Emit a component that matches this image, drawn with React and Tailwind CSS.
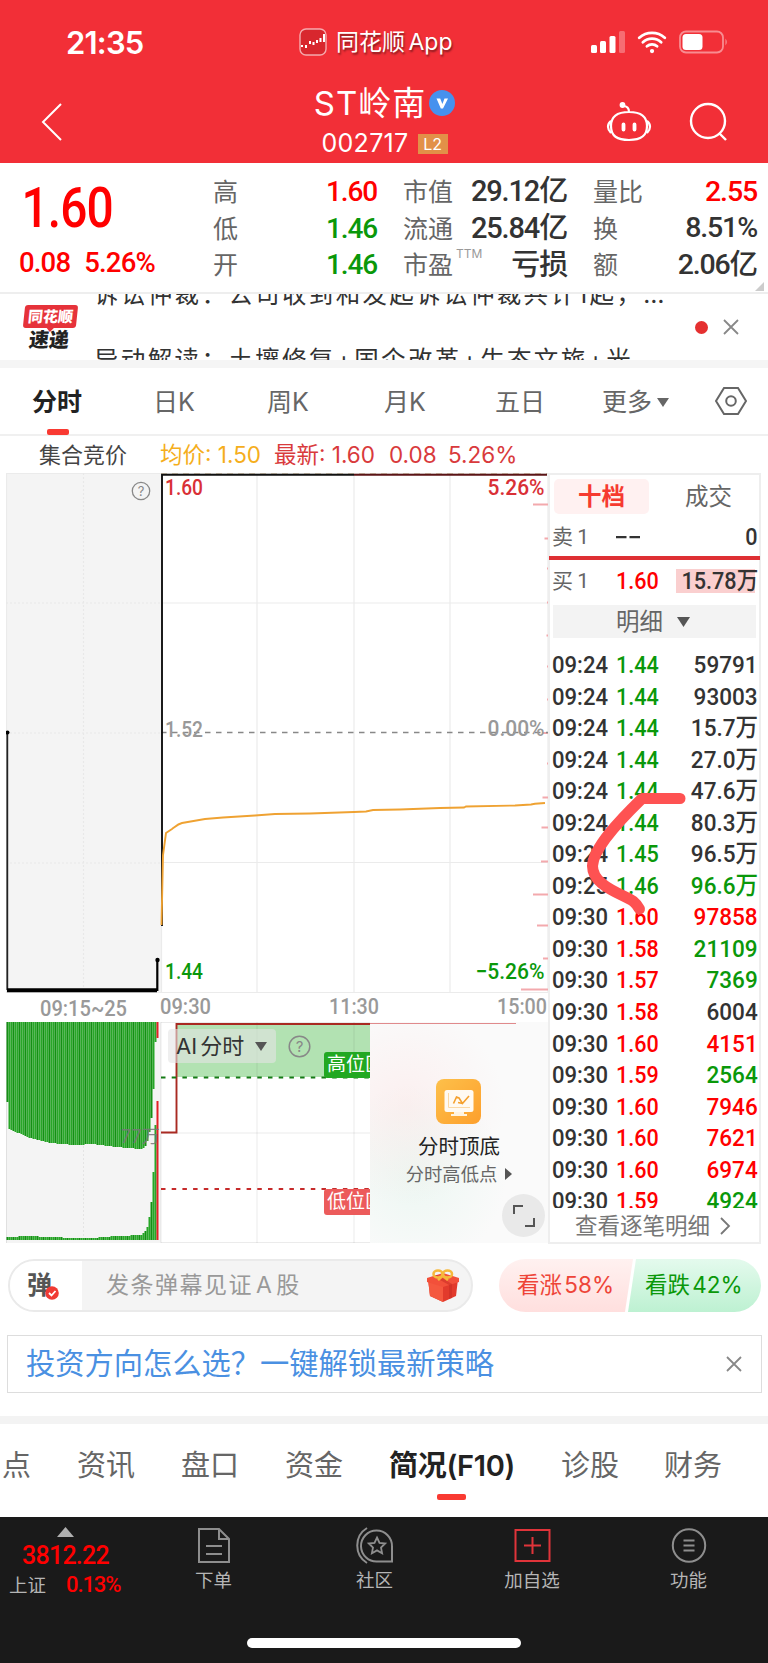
import React from "react";
import { IoWifi } from "react-icons/io5";

const GREEN = "text-[#0a980a]";
const RED = "text-[#f00]";
const DARK = "text-[#333]";

const stats = [
  {
    width: "w-[164px]",
    size: "text-[28px]",
    items: [
      { label: "高", value: "1.60", color: RED },
      { label: "低", value: "1.46", color: GREEN },
      { label: "开", value: "1.46", color: GREEN },
    ],
  },
  {
    width: "w-[164px]",
    size: "text-[29px]",
    items: [
      { label: "市值", value: "29.12亿", color: DARK },
      { label: "流通", value: "25.84亿", color: DARK },
      { label: "市盈", sup: "TTM", value: "亏损", color: DARK },
    ],
  },
  {
    width: "w-[164px]",
    size: "text-[28.500px]",
    items: [
      { label: "量比", value: "2.55", color: RED },
      { label: "换", value: "8.51%", color: DARK },
      { label: "额", value: "2.06亿", color: DARK },
    ],
  },
];

const trades = [
  ["09:24", "1.44", "59791", GREEN, DARK],
  ["09:24", "1.44", "93003", GREEN, DARK],
  ["09:24", "1.44", "15.7万", GREEN, DARK],
  ["09:24", "1.44", "27.0万", GREEN, DARK],
  ["09:24", "1.44", "47.6万", GREEN, DARK],
  ["09:24", "1.44", "80.3万", GREEN, DARK],
  ["09:24", "1.45", "96.5万", GREEN, DARK],
  ["09:25", "1.46", "96.6万", GREEN, GREEN],
  ["09:30", "1.60", "97858", RED, RED],
  ["09:30", "1.58", "21109", RED, GREEN],
  ["09:30", "1.57", "7369", RED, GREEN],
  ["09:30", "1.58", "6004", RED, DARK],
  ["09:30", "1.60", "4151", RED, RED],
  ["09:30", "1.59", "2564", RED, GREEN],
  ["09:30", "1.60", "7946", RED, RED],
  ["09:30", "1.60", "7621", RED, RED],
  ["09:30", "1.60", "6974", RED, RED],
  ["09:30", "1.59", "4924", RED, GREEN],
];

const NUM =
  "font-[family-name:Roboto,'Noto_Sans_CJK_SC',sans-serif] font-medium";

// [x, bottom of the upper bars, top of the lower bars]
const auctionShape = [
  [0, 80, 215],
  [2, 107, 215],
  [20, 115, 214],
  [42, 121, 215],
  [68, 123, 216],
  [85, 122, 216],
  [110, 125, 214],
  [134, 127, 213],
  [138, 124, 209],
  [141, 117, 203],
  [144, 96, 180],
  [146, 67, 150],
  [148, 20, 103],
  [150, 20, 103],
];

function shapeAt(x, col) {
  for (let i = 1; i < auctionShape.length; i++) {
    const a = auctionShape[i - 1];
    const b = auctionShape[i];
    if (x <= b[0]) {
      return a[col] + ((b[col] - a[col]) * (x - a[0])) / (b[0] - a[0]);
    }
  }
  return auctionShape[auctionShape.length - 1][col];
}

const auctionBars = Array.from({ length: 75 }, (_, i) => ({
  x: i * 2,
  up: i === 0 ? 80 : Math.round(shapeAt(i * 2, 1)),
  low: Math.round(shapeAt(i * 2, 2)),
}));

function StatusBar() {
  return (
    <div className="flex h-[84px] items-center pl-[66px] pr-[37px] text-white">
      <div className="w-[233px] text-[31px] font-semibold leading-none tracking-[-0.8px]">
        21:35
      </div>
      <div className="flex w-[292px] items-center">
        <svg width="28" height="28" viewBox="0 0 28 28" fill="none">
          <rect x="1" y="1" width="26" height="26" rx="6" fill="#d8272e" stroke="#fff" strokeOpacity=".6" strokeWidth="1.4" />
          <path d="M3 17v2M7 17v3M11 13v3M14.500 14v3M18 12v3M21.500 10v4M25 6v8" stroke="#fff" strokeWidth="2" />
        </svg>
        <span className="ml-[9px] text-[23px] leading-none [text-shadow:1px_2px_2px_rgba(0,0,0,.45)] [word-spacing:-3px]">
          同花顺 App
        </span>
      </div>
      <svg width="34" height="24" viewBox="0 0 34 24" fill="#fff">
        <rect x="0" y="15" width="6" height="8" rx="1.500" />
        <rect x="9" y="11" width="6" height="12" rx="1.500" />
        <rect x="18.500" y="6" width="6" height="17" rx="1.500" />
        <rect x="28" y="1" width="6" height="22" rx="1.500" opacity=".3" />
      </svg>
      <IoWifi className="ml-[10px] h-[34px] w-[34px]" />
      <svg className="ml-[10px]" width="50" height="24" viewBox="0 0 50 24">
        <rect x="1" y="1.500" width="43" height="21" rx="6" fill="none" stroke="#fff" strokeOpacity=".45" strokeWidth="1.800" />
        <rect x="3.500" y="4" width="20" height="16" rx="3.500" fill="#fff" />
        <path d="M46.500 8.500q2.500 3.500 0 7z" fill="#fff" opacity=".5" />
      </svg>
    </div>
  );
}

function Header() {
  return (
    <header className="h-[163px] bg-[#f22f37]">
      <StatusBar />
      <div className="flex h-[79px] items-start justify-between pl-[40px] pr-[39px] text-white">
        <svg className="mt-[19px]" width="24" height="38" viewBox="0 0 24 38" fill="none" stroke="#fff" strokeWidth="2">
          <path d="M21 1 3 19l18 18" />
        </svg>
        <div className="ml-[99px] flex w-[180px] flex-col items-center">
          <div className="flex h-[38px] items-center">
            <span className="whitespace-nowrap text-[33px] leading-none tracking-[1px]">ST岭南</span>
            <svg className="ml-[3px]" width="26" height="26" viewBox="0 0 26 26">
              <circle cx="13" cy="13" r="13" fill="#4691ee" />
              <path d="M7.500 8.500h3.700l2.200 5.600 2.100-5.600h3.500l-5 10h-2.200z" fill="#fff" />
            </svg>
          </div>
          <div className="flex h-[43px] items-center">
            <span className="text-[25px] leading-none tracking-[0.3px]">002717</span>
            <span className="ml-[9px] flex h-[20px] w-[30px] items-center justify-center bg-[#e29048] text-[16px] leading-none">
              L2
            </span>
          </div>
        </div>
        <div className="flex gap-[37px] pt-[17px]">
          <svg width="46" height="42" viewBox="0 0 46 42" fill="none" stroke="#fff" strokeWidth="2.200">
            <path d="M23 11c13 0 18 5 18 14 0 10-6 14-18 14S5 35 5 25c0-9 5-14 18-14zM5 20c-4 3-4 8 0 12M41 20c4 3 4 8 0 12M23 11c0-4-2-6-6-6" />
            <circle cx="16.500" cy="4" r="1.800" fill="#fff" />
            <path d="M17.500 23.500v5M28.500 23.500v5" strokeWidth="3.800" strokeLinecap="round" />
          </svg>
          <svg width="40" height="42" viewBox="0 0 40 42" fill="none" stroke="#fff" strokeWidth="2.400">
            <circle cx="19" cy="20" r="17" />
            <path d="m30 32 7 7" />
          </svg>
        </div>
      </div>
    </header>
  );
}

function Quote() {
  return (
    <section className="relative flex h-[131px] border-b-2 border-[#eee] pt-[10px]">
      <div className="w-[213px] pl-[19px]">
        <div className={`${NUM} ${RED} w-[120px] origin-left scale-x-[0.87] pl-[3px] pt-[10px] text-[55px] leading-[50px] tracking-[-0.02em]`}>
          1.60
        </div>
        <div className={`${NUM} ${RED} flex gap-[14px] pt-[15px] text-[27.500px] leading-[30px] tracking-[-0.03em]`}>
          <span>0.08</span>
          <span>5.26%</span>
        </div>
      </div>
      <div className="flex gap-[26px]">
        {stats.map((col, i) => (
          <div key={i} className={col.width}>
            {col.items.map((s) => (
              <div key={s.label} className="flex h-[36.700px] items-center justify-between whitespace-nowrap">
                <span className="flex pt-[2px] text-[25px] leading-none text-[#666]">
                  {s.label}
                  {s.sup && (
                    <span className="-mt-[5px] ml-[3px] text-[12px] text-[#999]">
                      {s.sup}
                    </span>
                  )}
                </span>
                <span className={`${NUM} ${s.color} ${col.size} pt-[1px] leading-none tracking-[-0.04em]`}>
                  {s.value}
                </span>
              </div>
            ))}
          </div>
        ))}
      </div>
      <svg className="absolute bottom-[1px] right-[4px]" width="9" height="9">
        <path d="M9 0v9H0z" fill="#ccc" />
      </svg>
    </section>
  );
}

function News() {
  return (
    <section className="flex h-[66px] overflow-hidden bg-white">
      <div className="w-[94px] pl-[24px] pt-[11px]">
        <div className="relative flex h-[23px] w-[53px] -skew-x-6 items-center justify-center rounded-[3px] bg-[#e6323a] text-[15px] font-black leading-none text-white">
          同花顺
          <svg className="absolute -bottom-[4px] left-[23px]" width="9" height="5">
            <path d="M0 0h9L4.500 5z" fill="#e6323a" />
          </svg>
        </div>
        <div className="mt-[2px] -skew-x-6 pl-[5px] text-[20px] font-black leading-[20px] text-[#222]">
          速递
        </div>
      </div>
      <div className="h-[66px] w-[592px] overflow-hidden whitespace-nowrap text-[24.500px] tracking-[2.350px] text-[#333]">
        <div className="-mt-[20px] h-[60px] leading-[40px]">
          诉讼仲裁：公司收到和发起诉讼仲裁共计1起，…
        </div>
        <div className="mt-[6px] leading-[40px]">
          异动解读：土壤修复+国企改革+生态文旅+光
        </div>
      </div>
      <div className="flex h-[66px] items-center pl-[9px]">
        <span className="h-[13px] w-[13px] rounded-full bg-[#e53030]" />
        <svg className="ml-[15px]" width="16" height="16" stroke="#888" strokeWidth="1.800">
          <path d="m1 1 14 14M15 1 1 15" />
        </svg>
      </div>
    </section>
  );
}

function PeriodTabs() {
  return (
    <nav className="flex h-[68px] items-center border-b-2 border-[#f0f0f0] pt-[2px] text-[25px] leading-none text-[#666]">
      <div className="relative ml-[32px] w-[121px] font-bold text-[#222]">
        分时
        <span className="absolute -bottom-[20px] left-[15px] h-[6px] w-[22px] rounded-[2px] bg-[#f93a32]" />
      </div>
      <div className="w-[114px]">日K</div>
      <div className="w-[117px]">周K</div>
      <div className="w-[111px]">月K</div>
      <div className="w-[107px]">五日</div>
      <div className="flex w-[112px] items-center">
        更多
        <svg className="ml-[5px]" width="12" height="9">
          <path d="M0 0h12L6 9z" fill="#666" />
        </svg>
      </div>
      <svg className="-mt-[2px]" width="34" height="30" viewBox="0 0 34 30" fill="none" stroke="#666" strokeWidth="2">
        <path d="M10 2h14l8 13-8 13H10L2 15z" />
        <circle cx="17" cy="15" r="4.800" />
      </svg>
    </nav>
  );
}

function Legend() {
  return (
    <div className="flex h-[37px] items-center whitespace-nowrap pt-[1px] text-[22.500px] leading-none">
      <span className="ml-[39px] w-[121px] text-[22px] text-[#444]">集合竞价</span>
      <span className="w-[114px] text-[#f5ae1c]">均价: 1.50</span>
      <span className="w-[115px] text-[#d93a3c]">最新: 1.60</span>
      <span className="w-[59px] text-[#d93a3c]">0.08</span>
      <span className="text-[#d93a3c]">5.26%</span>
    </div>
  );
}

const label = { fontFamily: "Roboto", fontWeight: 500, fontSize: 22 };

function PriceChart() {
  return (
    <svg className="block" width="542" height="550" viewBox="6 473 542 550">
      <rect x="6" y="473" width="155" height="520" fill="#f4f4f4" />
      <g stroke="#ebebeb" strokeWidth="1.200" fill="none">
        <path d="M6 473.500h542M161 603h387M161 862.500h387M6 992.500h542M6.500 473v520M161.500 473v520M257 473v520M354 473v520M450 473v520M548 473v520" />
        <path d="M83.500 473v520M6 603h155M6 733h155M6 863h155" strokeDasharray="2 2" stroke="#e8e8e8" />
      </g>
      <path d="M533 504.500h15M544.500 538.500h4M547 568.500h1M547 602.500h1M546.500 635.500h2M547 666.500h1M547 699.500h1M543 733h5M547 763.500h1M542.500 797.500h6M541.500 827.500h7M541 861.500h7M533 894.500h15M537 925.500h11M543 958.500h5M521 989.500h27" stroke="#f3a9ad" strokeWidth="1.800" />
      <path d="M161 732.500h387" stroke="#888" strokeWidth="1.300" strokeDasharray="5.500 5.500" />
      <path d="M161 473.300h386" stroke="#c9b9a0" strokeWidth="1" strokeDasharray="6 5" />
      <path d="M162 926V474.700h192" stroke="#111" strokeWidth="1.900" fill="none" />
      <path d="M354 474.700h193" stroke="#5b1416" strokeWidth="1.900" />
      <path d="M161.500 925 163 855l3-22 6-4c4-3 6-5 10-6l23-4 18-1.500 32-2 20-1.500 35-.5 44-1.500 12-.5 7-1.500 27-.5 40-1.500 24-.5 2-1 49-1 16-1 4-.7 10-.8" stroke="#efa232" strokeWidth="1.900" fill="none" />
      <path d="M7.300 732v258" stroke="#222" strokeWidth="1.800" />
      <path d="M7 990.300h150" stroke="#000" strokeWidth="4" />
      <path d="M157.300 991v-31" stroke="#000" strokeWidth="2.200" />
      <circle cx="7.500" cy="732.500" r="2" />
      <circle cx="157.500" cy="960" r="2.200" />
      <g fill="none" stroke="#888" strokeWidth="1.300">
        <circle cx="141" cy="491" r="8.700" />
      </g>
      <text x="141" y="496" textAnchor="middle" fontSize="13" fill="#888">?</text>
      <g style={label}>
        <text x="165" y="495" textLength="38" lengthAdjust="spacingAndGlyphs" fill="#d93036">1.60</text>
        <text x="487.500" y="495" textLength="57" lengthAdjust="spacingAndGlyphs" fill="#d93036">5.26%</text>
        <text x="165" y="736.500" textLength="38" lengthAdjust="spacingAndGlyphs" fill="#999">1.52</text>
        <text x="487.500" y="736" textLength="57" lengthAdjust="spacingAndGlyphs" fill="#999">0.00%</text>
        <text x="165" y="979" textLength="38" lengthAdjust="spacingAndGlyphs" fill="#0a980a">1.44</text>
        <text x="475.500" y="979" textLength="69" lengthAdjust="spacingAndGlyphs" fill="#0a980a">−5.26%</text>
        <g fill="#999">
          <text x="40" y="1016" textLength="87" lengthAdjust="spacingAndGlyphs">09:15~25</text>
          <text x="160" y="1014" textLength="51" lengthAdjust="spacingAndGlyphs">09:30</text>
          <text x="329" y="1014" textLength="50" lengthAdjust="spacingAndGlyphs">11:30</text>
          <text x="497" y="1014" textLength="50" lengthAdjust="spacingAndGlyphs">15:00</text>
        </g>
      </g>
    </svg>
  );
}

function VolumeChart() {
  return (
    <div className="relative h-[221px] w-[542px] overflow-hidden">
      <svg className="block" width="542" height="221" viewBox="0 0 542 221">
        <rect width="155" height="221" fill="#f4f4f4" />
        <path d="M77.500 120v100" stroke="#e4e4e4" strokeDasharray="2 2" />
        {auctionBars.map((b) => (
          <g key={b.x} fill={(b.x / 2) % 3 === 0 ? "#149014" : "#27a627"}>
            <rect x={b.x + 0.5} y="0" width="2" height={b.up} />
            <rect x={b.x + 0.5} y={b.low} width="2" height={218 - b.low} />
          </g>
        ))}
        <path d="M151.500 0v16M151.500 79v139" stroke="#e22026" strokeWidth="2" />
        <text x="115" y="121" fontSize="18" fill="#777" fillOpacity=".85">77万</text>
        <rect x="171" y="1" width="200" height="54" fill="#b2e2b2" />
        <path d="M155 .5h387M155 111h387M155 220.500h387M.5 0v221M155 0v221M251 0v221M348 0v221" stroke="#000" strokeOpacity=".08" fill="none" />
        <path d="M155 110.500h15.500V2H375" stroke="#a92a22" strokeWidth="1.900" fill="none" />
        <path d="M155 55.500h220" stroke="#147a14" strokeWidth="2" strokeDasharray="4.500 6.200" />
        <path d="M155 167h220" stroke="#c62b2b" strokeWidth="2" strokeDasharray="4.500 6.200" />
      </svg>
      <div className="absolute left-[318px] top-[30px] h-[26px] w-[66px] whitespace-nowrap rounded-[3px] bg-[#22a822] pl-[3px] text-[19px] leading-[26px] text-white">
        高位区
      </div>
      <div className="absolute left-[318px] top-[167px] h-[26px] w-[66px] whitespace-nowrap rounded-[3px] bg-[#ec5b5b] pl-[3px] text-[19px] leading-[26px] text-white">
        低位区
      </div>
      <div className="absolute left-[162px] top-[7px] flex h-[34px] w-[108px] items-center rounded-[4px] bg-[#e5e5e5]/60 pl-[8px] text-[22px] leading-none text-[#333] [word-spacing:-3px]">
        AI 分时
        <svg className="ml-[11px]" width="12" height="9">
          <path d="M0 0h12L6 9z" fill="#555" />
        </svg>
      </div>
      <svg className="absolute left-[282px] top-[13px]" width="23" height="23">
        <circle cx="11.500" cy="11.500" r="10.300" fill="none" stroke="#888" strokeWidth="1.500" />
        <text x="11.500" y="17" fontSize="15" textAnchor="middle" fill="#888">?</text>
      </svg>
      <div className="absolute left-[364px] top-0 flex h-[221px] w-[178px] flex-col items-center bg-[#fafafa] bg-[radial-gradient(circle_at_20%_38%,rgba(255,215,215,.3),transparent_50%),radial-gradient(circle_at_25%_70%,rgba(205,240,225,.3),transparent_45%)] pt-[57px]">
        <span className="absolute left-0 top-[1px] h-[1px] w-[146px] bg-[#e08a8c]" />
        <svg className="-ml-[1px]" width="45" height="45" viewBox="0 0 45 45">
          <defs>
            <linearGradient id="tip" x1="0" y1="0" x2="1" y2="1">
              <stop offset="0" stopColor="#fdc04a" />
              <stop offset="1" stopColor="#fd9f2c" />
            </linearGradient>
          </defs>
          <rect width="45" height="45" rx="8" fill="url(#tip)" />
          <rect x="8.500" y="11" width="29" height="22" rx="2.500" fill="#fffaf2" />
          <path d="M18 33h10v2h3v2H15v-2h3z" fill="#fff3df" />
          <path d="M12.500 14v14.500H34" stroke="#fbd9a5" fill="none" />
          <path d="M17.500 24.500 20.500 18l2.500 1 3.500 5.500 6.500-7.500M22 23.500l4.500 1" stroke="#f5a02c" strokeWidth="1.600" fill="none" />
        </svg>
        <div className="mt-[12px] text-[20.500px] leading-[21px] text-[#222]">分时顶底</div>
        <div className="mt-[8px] flex items-center text-[18.300px] leading-[18px] text-[#666]">
          分时高低点
          <svg className="ml-[8px]" width="7" height="12">
            <path d="M0 0v12l7-6z" fill="#555" />
          </svg>
        </div>
        <div className="absolute left-[132px] top-[172px] flex h-[43px] w-[43px] items-center justify-center rounded-full bg-[#e9e9e9]">
          <svg width="24" height="24" fill="none" stroke="#555" strokeWidth="2">
            <path d="M2 10V2h9M22 14v8h-9" />
          </svg>
        </div>
      </div>
    </div>
  );
}

function OrderPanel() {
  return (
    <aside className="flex h-[771px] w-[213px] flex-col border-2 border-[#eee]">
      <div className="flex h-[43px] items-center pl-[4px] text-[23.500px] leading-none">
        <span className="flex h-[35px] w-[95px] items-center justify-center rounded-[5px] bg-[#fff1f1] font-bold text-[#f63a30]">
          十档
        </span>
        <span className="ml-[36px] text-[#666]">成交</span>
      </div>
      <div className={`${NUM} flex h-[38px] items-center pl-[2px] pr-[1px] text-[24px] leading-none text-[#333]`}>
        <span className="w-[64px] text-[21px] font-normal text-[#666] [word-spacing:-1px]">卖 1</span>
        <svg width="25" height="4" fill="#333">
          <path d="M0 1h10.500v2.200H0zM13.500 1H24v2.200H13.500z" />
        </svg>
        <span className="ml-auto origin-right scale-x-[0.9]">0</span>
      </div>
      <div className="-mx-[1px] h-[4px] bg-[#de2f33]" />
      <div className={`${NUM} flex h-[42px] items-center pl-[2px] pr-[1px] text-[24px] leading-none text-[#333]`}>
        <span className="w-[64px] text-[21px] font-normal text-[#666] [word-spacing:-1px]">买 1</span>
        <span className={`${RED} origin-left scale-x-[0.9]`}>1.60</span>
        <span className="ml-auto flex h-[24px] w-[82px] items-center justify-end whitespace-nowrap bg-[linear-gradient(to_right,#facfcf_79px,transparent_79px)]">
          <span className="origin-right scale-x-[0.9]">15.78万</span>
        </span>
      </div>
      <div className="mx-[3px] mt-[3px] flex h-[33px] items-center bg-[#f3f3f3] pl-[63px] text-[23.500px] leading-none text-[#666]">
        明细
        <svg className="ml-[14px]" width="13" height="10">
          <path d="M0 0h13L6.500 10z" fill="#555" />
        </svg>
      </div>
      <div className="mt-[11px] h-[559px] overflow-hidden pt-[0.500px]">
        {trades.map(([time, price, vol, priceColor, volColor], i) => (
          <div key={i} className={`${NUM} flex h-[31.560px] items-center pl-[2px] pr-[1px] text-[24.500px] leading-none`}>
            <span className={`w-[64px] origin-left scale-x-[0.9] ${DARK}`}>{time}</span>
            <span className={`origin-left scale-x-[0.88] ${priceColor}`}>{price}</span>
            <span className={`ml-auto origin-right scale-x-[0.92] ${volColor}`}>{vol}</span>
          </div>
        ))}
      </div>
      <div className="flex h-[34px] items-center pl-[25px] pt-[2px] text-[22.500px] leading-none text-[#777]">
        查看逐笔明细
        <svg className="ml-[10px]" width="11" height="18" fill="none" stroke="#777" strokeWidth="1.800">
          <path d="m1 1 8 8-8 8" />
        </svg>
      </div>
    </aside>
  );
}

function Annotation() {
  return (
    <svg className="pointer-events-none absolute left-[575px] top-[315px]" width="120" height="140" viewBox="575 788 120 140">
      <path d="M680 798.500h-38C620 820 593 848 592.500 866c0 14 14 22 31 30 9 4 12 6 16 13" fill="none" stroke="#fe5252" strokeWidth="11" strokeLinecap="round" strokeLinejoin="round" />
    </svg>
  );
}

function Danmaku() {
  return (
    <section className="flex h-[91px] pl-[8px] pt-[15px]">
      <div className="flex h-[53px] w-[465px] items-center overflow-hidden rounded-full border-2 border-[#eaeaea] bg-[#f4f4f4]">
        <div className="relative h-full w-[72px] bg-white pl-[17px] text-[25px] font-bold leading-[48px] text-[#555]">
          弹
          <svg className="absolute left-[35px] top-[25px]" width="14" height="14">
            <circle cx="7" cy="7" r="6.800" fill="#f03a34" />
            <path d="m4 7 2.500 2.500L10.500 5" fill="none" stroke="#fff" strokeWidth="1.800" />
          </svg>
        </div>
        <span className="pl-[24px] text-[23px] leading-none tracking-[1.500px] text-[#999] [word-spacing:-5px]">
          发条弹幕见证 A 股
        </span>
        <svg className="ml-auto mr-[12px]" width="32" height="34" viewBox="0 0 32 34">
          <path d="m1 10 15-5 15 5-2 17-13 6L3 27z" fill="#e23a2c" />
          <path d="m1 10 15 5v18L3 27z" fill="#f4583f" />
          <path d="m0 9 16-5 16 5v4l-16 5-16-5z" fill="#f2503a" />
          <path d="m6 7 16 9v14l3-1V15L10 6z" fill="#c62a22" opacity=".5" />
          <g fill="none" stroke="#f6b83c" strokeWidth="2.600">
            <ellipse cx="11" cy="5" rx="4.500" ry="3.500" />
            <ellipse cx="20.500" cy="5" rx="4.500" ry="3.500" />
            <path d="M15.500 7 11 11M16 7l5 4" />
          </g>
        </svg>
      </div>
      <div className="ml-[26px] flex text-[22.500px] leading-none [word-spacing:-4px]">
        <div className="flex h-[53px] w-[134px] items-center rounded-l-full bg-linear-to-b from-[#fff1f0] to-[#ffdfde] pl-[18px] text-[#ee4438] [clip-path:polygon(0_0,100%_0,94%_100%,0_100%)]">
          看涨 58%
        </div>
        <div className="-ml-[5px] flex h-[53px] w-[133px] items-center rounded-r-full bg-linear-to-b from-[#e4faed] to-[#bdf1d2] pl-[17px] text-[#0a980a] [clip-path:polygon(6%_0,100%_0,100%_100%,0_100%)]">
          看跌 42%
        </div>
      </div>
    </section>
  );
}

function BottomNav() {
  return (
    <footer className="relative flex h-[147px] bg-[#1a1a1a] pt-[10px] text-[18.500px] leading-none text-[#b5b5b5]">
      <div className="w-[129px]">
        <svg className="ml-[57px]" width="17" height="10">
          <path d="M8.500 0 17 10H0z" fill="#b0b0b0" />
        </svg>
        <div className={`${NUM} ${RED} mt-[7px] pl-[22px] text-[25px] leading-[24px] tracking-[-0.03em]`}>
          3812.22
        </div>
        <div className="mt-[6px] flex items-center pl-[9px]">
          上证
          <span className={`${NUM} ${RED} ml-[20px] text-[22px] tracking-[-0.05em]`}>0.13%</span>
        </div>
      </div>
      <div className="flex w-[169px] flex-col items-center">
        <svg width="34" height="37" viewBox="0 0 34 37" fill="none" stroke="#8e8e8e" strokeWidth="2">
          <path d="M2 2h20l10 10v23H2zM22 2v10h10M9 19h16M9 27h16" />
        </svg>
        <span className="mt-[7px]">下单</span>
      </div>
      <div className="flex w-[153px] flex-col items-center">
        <svg width="38" height="37" viewBox="0 0 38 37" fill="none" stroke="#8e8e8e" strokeWidth="2">
          <path d="M36 34.500H21.500a15.500 15.500 0 1 1 14.500-15zM11 1C-2 9-2 28 11 36" />
          <path d="m21 10.500 2.500 5.300 5.700.7-4.200 4 1.100 5.700-5.100-2.800-5.100 2.800 1.100-5.700-4.200-4 5.700-.7z" strokeWidth="1.800" />
        </svg>
        <span className="mt-[7px]">社区</span>
      </div>
      <div className="flex w-[162px] flex-col items-center">
        <svg width="37" height="37" viewBox="0 0 37 37" fill="none" stroke="#e0343a" strokeWidth="2">
          <path d="M1.500 3h34v31h-34zM18.500 10v17M10 18.500h17" />
        </svg>
        <span className="mt-[7px]">加自选</span>
      </div>
      <div className="flex w-[151px] flex-col items-center">
        <svg width="36" height="37" viewBox="0 0 36 37" fill="none" stroke="#8e8e8e" strokeWidth="2">
          <circle cx="18" cy="18.500" r="16.200" />
          <path d="M12.500 13.500h11M12.500 18.500h11M12.500 23.500h11" />
        </svg>
        <span className="mt-[7px]">功能</span>
      </div>
      <span className="absolute left-[247px] top-[121px] h-[10px] w-[274px] rounded-full bg-white" />
    </footer>
  );
}

export default function App() {
  return (
    <div className="h-[1663px] w-[768px] overflow-hidden bg-white font-[family-name:Inter,'Noto_Sans_CJK_SC',sans-serif]">
      <Header />
      <Quote />
      <News />
      <div className="h-[8px] bg-[#f5f5f5]" />
      <PeriodTabs />
      <Legend />
      <main className="relative flex h-[771px] pl-[6px]">
        <div>
          <PriceChart />
          <div className="-mt-[1px]">
            <VolumeChart />
          </div>
        </div>
        <OrderPanel />
        <Annotation />
      </main>
      <Danmaku />
      <div className="ml-[7px] flex h-[58px] w-[755px] items-center justify-between border border-[#ddd] pl-[18px] pr-[19px]">
        <span className="text-[29.250px] leading-none text-[#4a90e2]">
          投资方向怎么选？一键解锁最新策略
        </span>
        <svg width="16" height="16" stroke="#888" strokeWidth="1.800">
          <path d="m1 1 14 14M15 1 1 15" />
        </svg>
      </div>
      <div className="mt-[23px] h-[8px] bg-[#f3f3f3]" />
      <nav className="flex h-[93px] whitespace-nowrap pl-[2px] pt-[26px] text-[29px] leading-[32px] text-[#666]">
        <span className="w-[75px]">点</span>
        <span className="w-[104px]">资讯</span>
        <span className="w-[104px]">盘口</span>
        <span className="w-[104px]">资金</span>
        <span className="relative w-[172px] font-semibold tracking-[-0.3px] text-[#222]">
          简况(F10)
          <span className="absolute left-[48px] top-[44px] h-[6px] w-[29px] rounded-[2px] bg-[#f93a32]" />
        </span>
        <span className="w-[103px]">诊股</span>
        <span>财务</span>
      </nav>
      <BottomNav />
    </div>
  );
}
